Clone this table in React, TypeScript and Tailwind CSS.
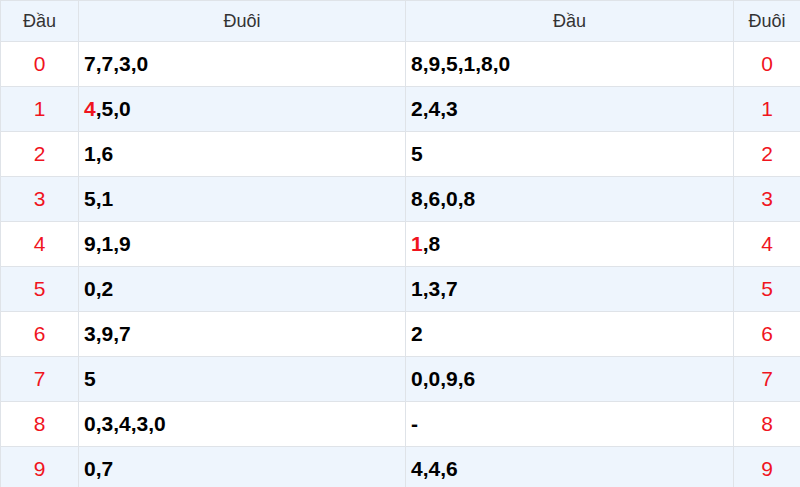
const rows: { d: string; left: React.ReactNode; right: React.ReactNode }[] = [
  { d: "0", left: "7,7,3,0", right: "8,9,5,1,8,0" },
  { d: "1", left: <><span className="text-[#f0141e]">4</span>,5,0</>, right: "2,4,3" },
  { d: "2", left: "1,6", right: "5" },
  { d: "3", left: "5,1", right: "8,6,0,8" },
  { d: "4", left: "9,1,9", right: <><span className="text-[#f0141e]">1</span>,8</> },
  { d: "5", left: "0,2", right: "1,3,7" },
  { d: "6", left: "3,9,7", right: "2" },
  { d: "7", left: "5", right: "0,0,9,6" },
  { d: "8", left: "0,3,4,3,0", right: "-" },
  { d: "9", left: "0,7", right: "4,4,6" },
];

export default function App() {
  return (
    <div className="w-[800px] h-[487px] overflow-hidden bg-white font-['Liberation_Sans',Arial,sans-serif]">
      <table className="w-[800px] border-collapse table-fixed">
        <colgroup>
          <col className="w-[78px]" />
          <col className="w-[327px]" />
          <col className="w-[328px]" />
          <col className="w-[67px]" />
        </colgroup>
        <thead>
          <tr className="h-[41px] bg-[#eef5fd] text-[18px] text-[#333]">
            <th className="border border-[#dfe3e8] font-normal text-center">Đầu</th>
            <th className="border border-[#dfe3e8] font-normal text-center">Đuôi</th>
            <th className="border border-[#dfe3e8] font-normal text-center">Đầu</th>
            <th className="border border-[#dfe3e8] font-normal text-center">Đuôi</th>
          </tr>
        </thead>
        <tbody>
          {rows.map((r, i) => (
            <tr key={r.d} className={`h-[45px] ${i % 2 === 1 ? "bg-[#eef5fd]" : "bg-white"}`}>
              <td className="border border-[#dfe3e8] text-center text-[21px] text-[#f0141e]">{r.d}</td>
              <td className="border border-[#dfe3e8] px-[5px] text-[21px] font-bold text-black">{r.left}</td>
              <td className="border border-[#dfe3e8] px-[5px] text-[21px] font-bold text-black">{r.right}</td>
              <td className="border border-[#dfe3e8] text-center text-[21px] text-[#f0141e]">{r.d}</td>
            </tr>
          ))}
        </tbody>
      </table>
    </div>
  );
}
